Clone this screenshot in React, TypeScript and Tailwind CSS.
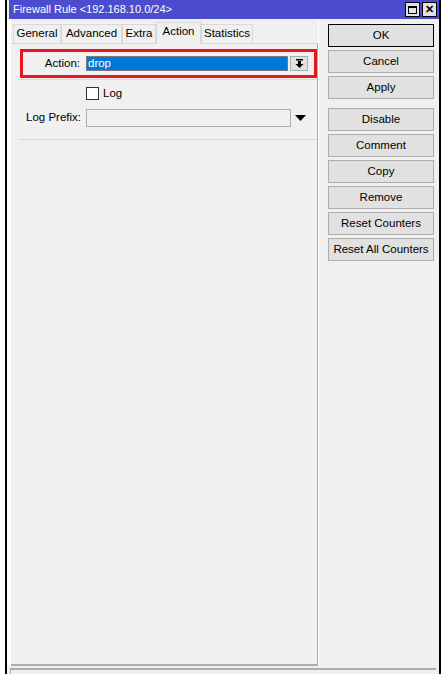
import React from "react";

const font = { fontFamily: '"Liberation Sans", Arial, sans-serif' };

function Btn({ label, primary }: { label: string; primary?: boolean }) {
  return (
    <div
      className={`h-[23px] w-[106px] flex items-center justify-center text-[11.5px] text-black bg-[#e1e1e1] border ${
        primary ? "border-black" : "border-[#adadad]"
      }`}
    >
      {label}
    </div>
  );
}

export default function App() {
  const tabs = ["General", "Advanced", "Extra", "Action", "Statistics"];
  const widths = ["w-[48px]", "w-[61px]", "w-[34px]", "w-[45px]", "w-[52px]"];
  return (
    <div className="w-[442px] h-[674px] bg-white overflow-hidden relative" style={font}>
      <div className="absolute left-[5px] top-0 w-[436px] h-[674px] border-l-2 border-r-2 border-black bg-[#f0f0f0] flex flex-col">
        {/* title bar */}
        <div className="h-[19px] ml-[2px] bg-[#4c4cce] flex items-center justify-between pl-[4px] pr-[2px]">
          <span className="text-white text-[11px] leading-none">Firewall Rule &lt;192.168.10.0/24&gt;</span>
          <div className="flex gap-[2px]">
            <div className="w-[15px] h-[15px] bg-[#e1e1e1] border border-black flex items-center justify-center">
              <div className="w-[9px] h-[8px] border border-black border-t-2" />
            </div>
            <div className="w-[15px] h-[15px] bg-[#e1e1e1] border border-black flex items-center justify-center text-[11px] font-bold leading-none">
              ✕
            </div>
          </div>
        </div>
        <div className="flex flex-1">
          {/* left panel */}
          <div className="w-[312px] pl-[3px] flex flex-col bg-white">
            <div className="w-[307px] flex flex-col flex-1 bg-[#f0f0f0] ml-[1px]">
              {/* tabs */}
              <div className="flex items-end h-[24px] pl-[2px]">
                {tabs.map((t, i) =>
                  t === "Action" ? (
                    <div
                      key={t}
                      className={`${widths[i]} h-[22px] bg-[#f0f0f0] border border-b-0 border-[#d9d9d9] flex items-center justify-center text-[11.5px] relative top-[1px] pb-[3px]`}
                    >
                      {t}
                    </div>
                  ) : (
                    <div
                      key={t}
                      className={`${widths[i]} h-[19px] bg-[#f0f0f0] border border-b-0 border-[#d9d9d9] flex items-center justify-center text-[11.5px]`}
                    >
                      {t}
                    </div>
                  )
                )}
              </div>
              <div className="flex-1 border-t border-r border-b-2 border-[#d9d9d9] border-r-[#adadad] border-b-[#adadad] pt-[5px] flex flex-col">
                {/* red box row */}
                <div className="ml-[9px] w-[297px] h-[29px] border-[3px] border-[#e8141e] flex items-center">
                  <span className="w-[63px] text-right text-[11.5px] pr-[6px]">Action:</span>
                  <div className="w-[202px] h-[15px] bg-[#0078d7] border border-[#7a7a7a] flex items-center pl-[1px] text-white text-[11.5px] leading-none">
                    drop
                  </div>
                  <div className="ml-[2px] w-[18px] h-[15px] bg-[#e1e1e1] border border-[#adadad] flex items-center justify-center">
                    <svg width="9" height="9" viewBox="0 0 9 9">
                      <rect x="1" y="0" width="7" height="1.5" fill="black" />
                      <rect x="3" y="2" width="3" height="3" fill="black" />
                      <polygon points="0.5,5 8.5,5 4.5,9" fill="black" />
                    </svg>
                  </div>
                </div>
                <div className="ml-[7px] mt-[1px] h-px bg-[#d9d9d9]" />
                <div className="flex items-center mt-[7px] ml-[75px] h-[13px]">
                  <div className="w-[13px] h-[13px] border border-[#333] bg-white" />
                  <span className="ml-[4px] text-[11.5px]">Log</span>
                </div>
                <div className="flex items-center mt-[9px] h-[18px]">
                  <span className="w-[75px] text-right text-[11.5px] pr-[5px]">Log Prefix:</span>
                  <div className="w-[205px] h-[18px] bg-[#f0f0f0] border border-[#adadad]" />
                  <svg className="ml-[4px]" width="11" height="7" viewBox="0 0 11 7">
                    <polygon points="0,0 11,0 5.5,6" fill="black" />
                  </svg>
                </div>
                <div className="ml-[7px] mt-[12px] h-px bg-[#d9d9d9]" />
              </div>
            </div>
          </div>
          {/* right buttons */}
          <div className="flex-1 flex flex-col items-start pl-[9px] pt-[5px]">
            <div className="flex flex-col gap-[3px]">
              <Btn label="OK" primary />
              <Btn label="Cancel" />
              <Btn label="Apply" />
            </div>
            <div className="flex flex-col gap-[3px] mt-[9px]">
              <Btn label="Disable" />
              <Btn label="Comment" />
              <Btn label="Copy" />
              <Btn label="Remove" />
              <Btn label="Reset Counters" />
              <Btn label="Reset All Counters" />
            </div>
          </div>
        </div>
        <div className="h-[6px] mx-[3px] mt-[2px] border-t-2 border-l border-[#adadad]" />
      </div>
    </div>
  );
}
